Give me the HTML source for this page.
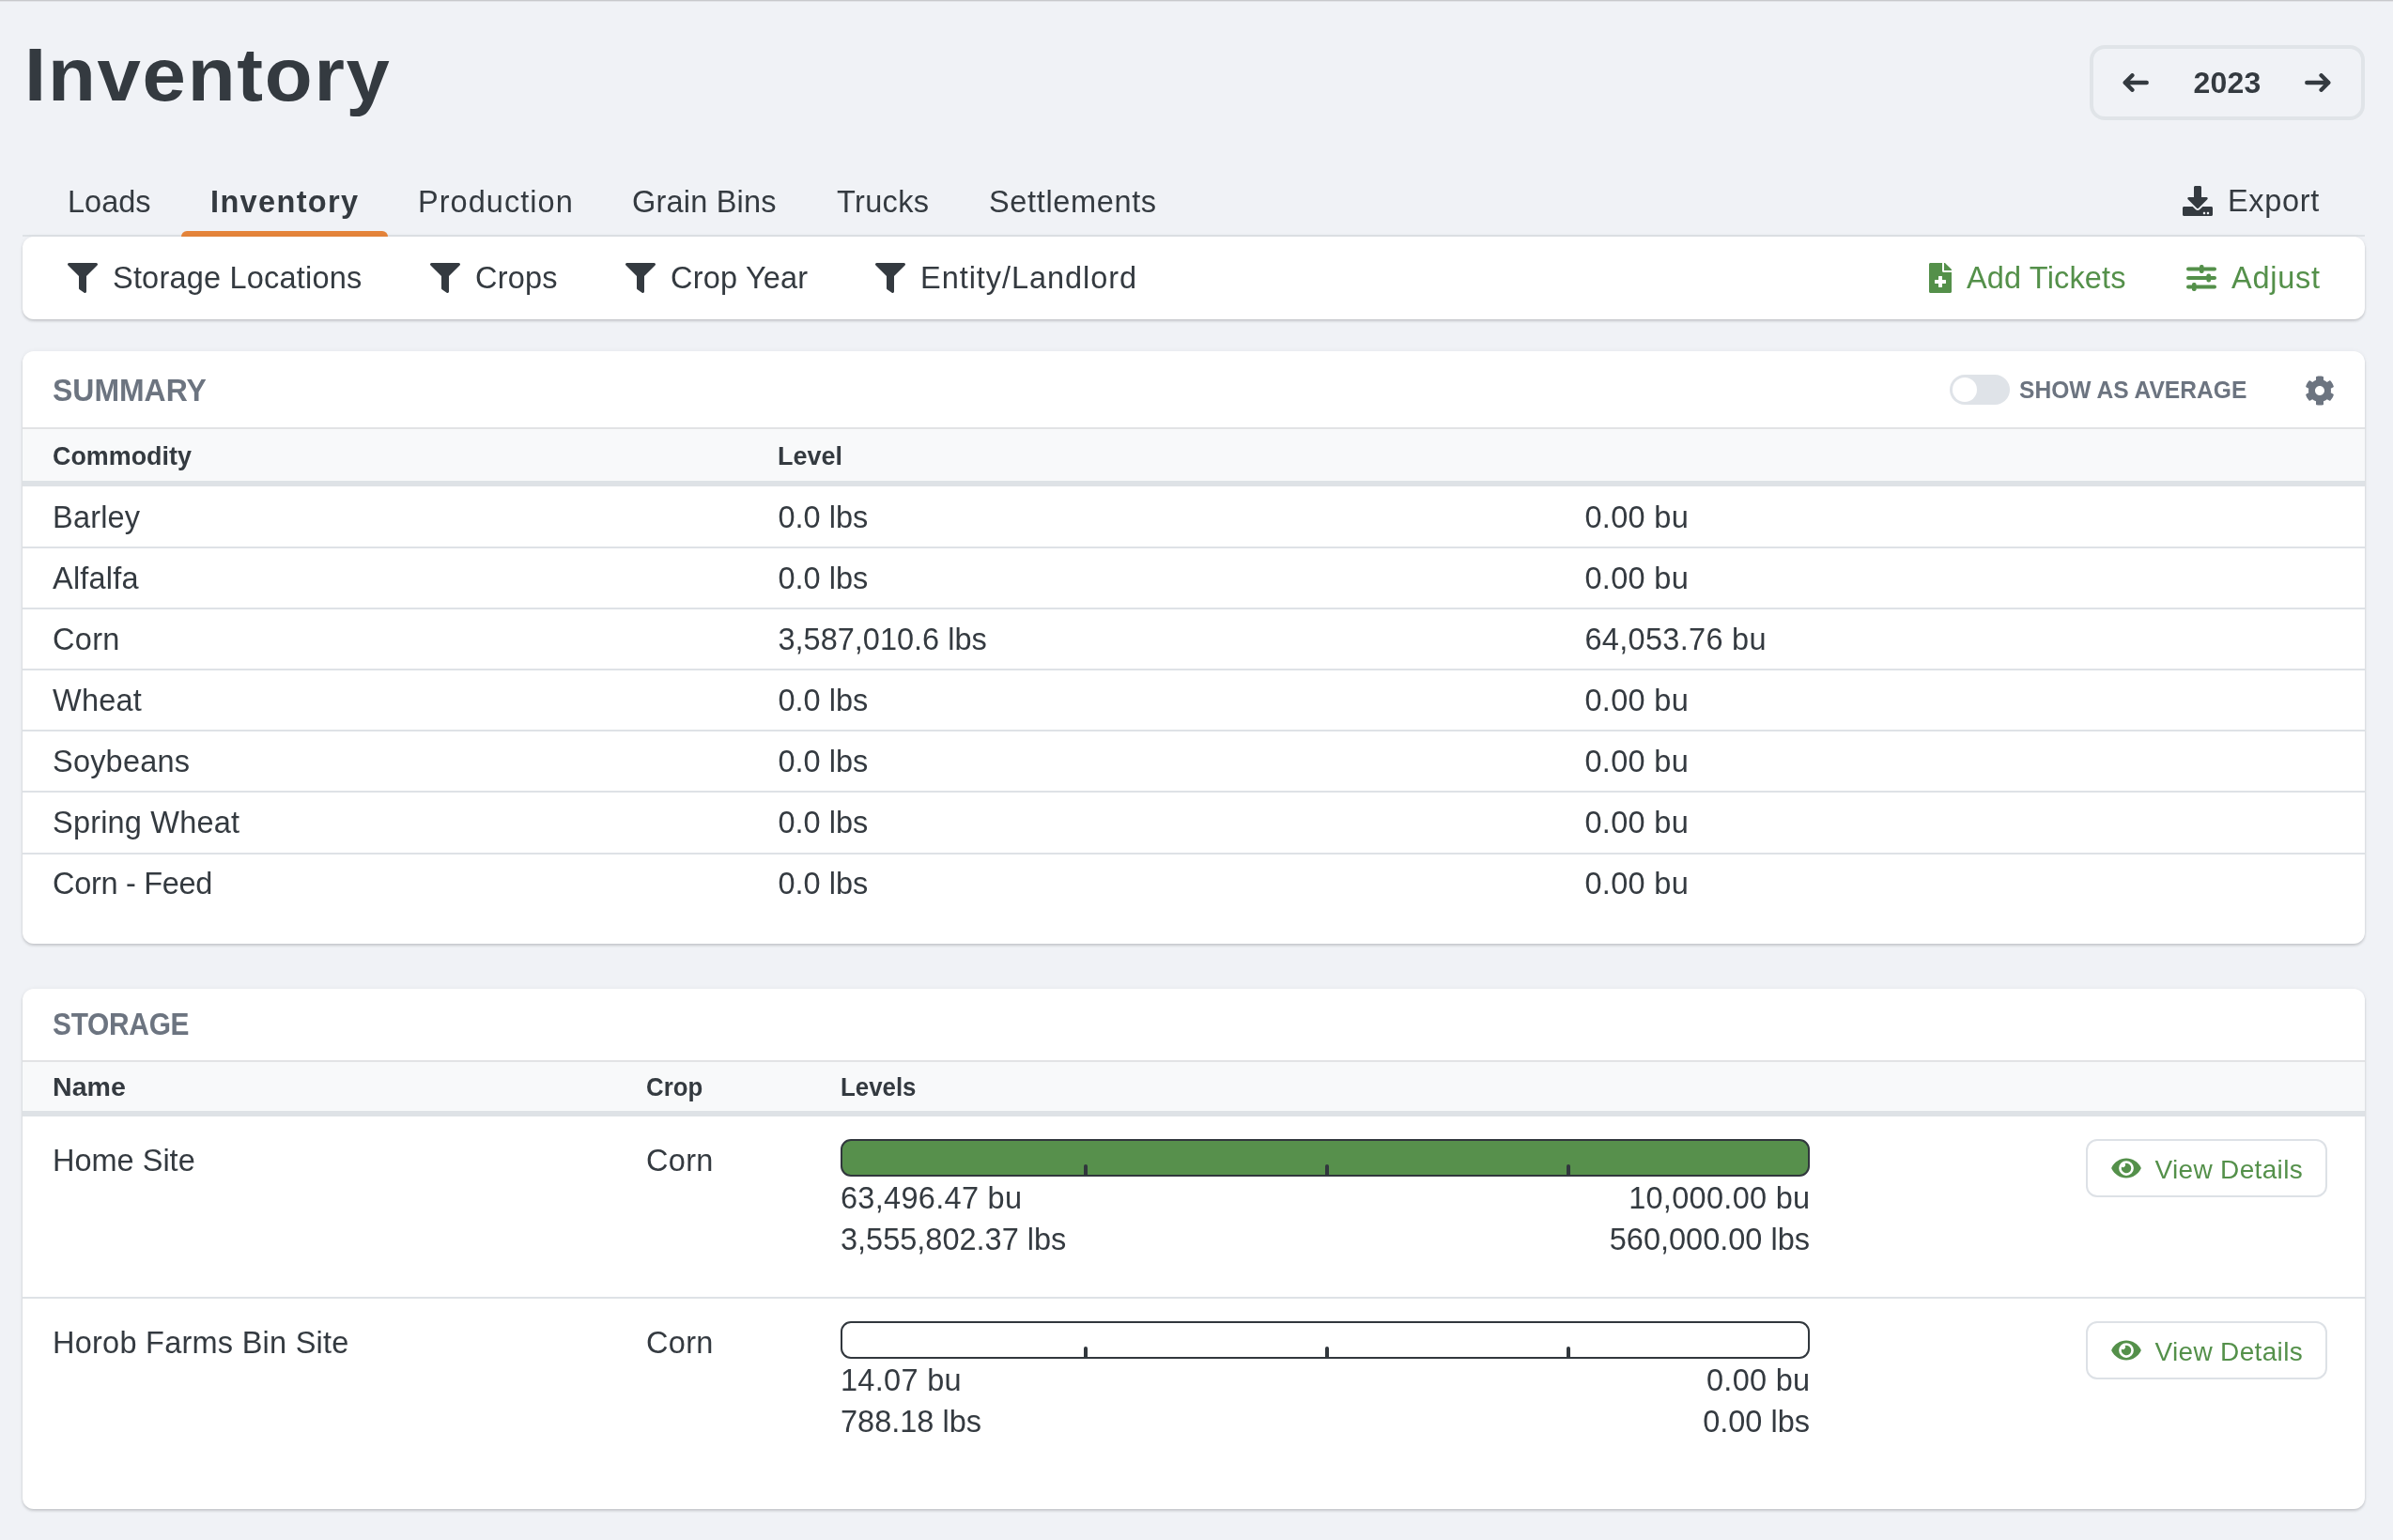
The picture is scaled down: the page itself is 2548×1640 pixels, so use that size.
<!DOCTYPE html>
<html lang="en">
<head>
<meta charset="utf-8">
<title>Inventory</title>
<style>
*{box-sizing:border-box;margin:0;padding:0}
html,body{width:2548px;height:1640px;overflow:hidden}
body{position:relative;background:#f0f2f6;color:#343a40;font-family:"Liberation Sans",sans-serif;font-size:32.5px;line-height:48px;letter-spacing:0}
svg{display:block;fill:currentColor}
.topline{position:absolute;left:0;top:0;width:2548px;height:2px;background:linear-gradient(#c8c9cc 0,#c8c9cc 50%,#e2e3e7 50%,#e2e3e7 100%)}
h1{position:absolute;left:25.800px;top:32px;font-size:80px;line-height:96px;font-weight:700;letter-spacing:1.7px;transform:scaleX(1.0406);transform-origin:0 0;white-space:nowrap}
.year{position:absolute;left:2225px;top:48px;width:293px;height:80px;border:4px solid #e0e4e8;border-radius:16px}
.year svg{position:absolute;top:26px;width:28px;height:20px;fill:none;stroke:currentColor;stroke-width:4.4;stroke-linecap:round;stroke-linejoin:round}
.year .prev{left:31px}
.year .next{left:225px}
.year b{position:absolute;left:0;width:100%;top:12px;text-align:center;font-size:32px;line-height:48px;letter-spacing:.2px}
.tabs{position:absolute;left:24px;top:178px;width:2494px;height:74px;border-bottom:2px solid #dee2e6;list-style:none}
.tabs li{position:absolute;top:0;height:74px;padding:13px 32px 0;white-space:nowrap}
.tabs li.active{font-weight:700;letter-spacing:1.35px;padding-left:31px}
.tabs li.active::after{content:"";position:absolute;left:0;bottom:0;width:100%;height:6px;background:#e5843a;border-radius:6px 6px 0 0}
.tabs li.active span{display:block}
.ico-btn{position:absolute;display:flex;align-items:center;white-space:nowrap;height:48px}
.ico-btn svg{flex:none;margin-right:16px}
.card{position:absolute;left:24px;width:2494px;background:#fff;border-radius:12px;box-shadow:0 2px 3px rgba(40,45,52,.2),0 0 5px rgba(40,45,52,.05)}
.filters{top:252px;height:88px}
.filters .ico-btn{top:20px}
.green{color:#54904a}
.card h2{position:absolute;left:32px;font-size:33px;line-height:48px;font-weight:700;color:#6c7480;white-space:nowrap}
table{position:absolute;left:0;width:2494px;border-collapse:separate;border-spacing:0;table-layout:fixed}
th{font-size:28px;line-height:40px;font-weight:700;letter-spacing:0;text-align:left;padding:0 0 0 32px;background:#f8f9fa;border-top:2px solid #e2e3e5;border-bottom:6px solid #dee2e6;white-space:nowrap}
td{padding:0 0 0 32px;border-bottom:2px solid #dee2e6;white-space:nowrap;vertical-align:top}
tr:last-child td{border-bottom-color:transparent}

.summary{top:374px;height:631px}
.summary h2{top:17.5px;letter-spacing:0;transform:scaleX(.968);transform-origin:0 50%}
.summary table{top:81px}
.summary th{height:63px;padding-top:3px}
.summary td{height:65px;line-height:59px;padding-top:2.5px}
.summary tr:first-child td,.summary tr:nth-child(6) td{height:66px;padding-top:3.5px}
.summary tr:nth-child(6) td{padding-top:3px}
.summary tr:last-child td{padding-top:2px}
.toggle{position:absolute;left:2052px;top:25px;width:64px;height:32px;border-radius:16px;background:#dfe3e8}
.toggle i{position:absolute;left:3px;top:3px;width:26px;height:26px;border-radius:13px;background:#fff}
.avg{position:absolute;left:2126px;top:25px;font-size:26.5px;line-height:32px;font-weight:700;color:#6c7480;letter-spacing:0;transform:scaleX(.928);transform-origin:0 50%;white-space:nowrap}
.gear{position:absolute;left:2430px;top:26px;color:#6c7480}
.storage{top:1053px;height:554px}
.storage h2{top:13.5px;letter-spacing:-.3px;transform:scaleX(.905);transform-origin:0 50%}
.storage table{top:76px}
.storage th{height:60px;padding-top:2px}
.storage td{height:194px;padding-top:23px}
.storage tr:last-child td{height:192px}
.bar{position:relative;width:1032px;height:40px;border:2px solid #31373d;border-radius:11px;background:#fff;overflow:hidden;margin-top:1px}
.bar.full{background:#57904c}
.bar i{position:absolute;bottom:0;width:4px;height:11px;border-radius:2px 2px 0 0;background:#31373d}
.lv{display:flex;justify-content:space-between;width:1032px;line-height:44px;margin-top:.5px}
.lv div:last-child{text-align:right}
.vd{position:absolute;left:2197px;width:257px;height:62px;border:2px solid #dde1e6;border-radius:12px;color:#54904a;font-size:28px;line-height:56px;letter-spacing:.33px;white-space:nowrap}
.vd svg{position:absolute;left:24.5px;top:15px}
.vd span{position:absolute;left:71.5px;top:2.5px}
th span,.sx{display:inline-block;transform-origin:0 50%}
body>*{will-change:transform}
.bu,.summary td:last-child{letter-spacing:.3px}
.summary td:first-child{letter-spacing:.2px}
.lv div:last-child .bu{margin-right:-.5px}
</style>
</head>
<body>
<div class="topline"></div>
<h1>Inventory</h1>

<div class="year">
  <svg class="prev" viewBox="0 0 28 20"><path d="M25.700 10H2.700M10.400 2.300L2.700 10l7.700 7.700"/></svg>
  <b>2023</b>
  <svg class="next" viewBox="0 0 28 20"><path d="M2.300 10h23M17.600 2.300l7.700 7.700-7.700 7.700"/></svg>
</div>
<ul class="tabs">
  <li style="left:16px">Loads</li>
  <li class="active" style="left:169px;width:220px">Inventory</li>
  <li style="left:389px;letter-spacing:1.05px">Production</li>
  <li style="left:617px;letter-spacing:.2px">Grain Bins</li>
  <li style="left:835px;letter-spacing:.35px">Trucks</li>
  <li style="left:997px;letter-spacing:.65px">Settlements</li>
</ul>
<div class="ico-btn" style="left:2324px;top:190px">
  <svg width="32" height="32" viewBox="0 0 512 512"><path d="M216 0h80c13.300 0 24 10.700 24 24v168h87.700c17.800 0 26.700 21.500 14.100 34.100L269.700 378.300c-7.500 7.500-19.800 7.500-27.300 0L90.100 226.100c-12.600-12.600-3.700-34.100 14.100-34.100H192V24c0-13.300 10.700-24 24-24zm296 376v112c0 13.300-10.700 24-24 24H24c-13.300 0-24-10.700-24-24V376c0-13.300 10.700-24 24-24h146.700l49 49c20.100 20.100 52.500 20.100 72.600 0l49-49H488c13.300 0 24 10.700 24 24zm-124 88c0-11-9-20-20-20s-20 9-20 20 9 20 20 20 20-9 20-20zm64 0c0-11-9-20-20-20s-20 9-20 20 9 20 20 20 20-9 20-20z"/></svg>
  <span style="letter-spacing:.65px">Export</span>
</div>
<div class="card filters">
  <div class="ico-btn" style="left:48px"><svg width="32" height="32" viewBox="0 0 512 512"><path d="M487.976 0H24.028C2.71 0-8.047 25.866 7.058 40.971L192 225.941V432c0 7.831 3.821 15.17 10.237 19.662l80 55.98C298.02 518.69 320 507.493 320 487.98V225.941l184.947-184.97C520.021 25.896 509.338 0 487.976 0z"/></svg><span style="letter-spacing:.2px">Storage Locations</span></div>
  <div class="ico-btn" style="left:434px"><svg width="32" height="32" viewBox="0 0 512 512"><path d="M487.976 0H24.028C2.71 0-8.047 25.866 7.058 40.971L192 225.941V432c0 7.831 3.821 15.17 10.237 19.662l80 55.98C298.02 518.69 320 507.493 320 487.98V225.941l184.947-184.97C520.021 25.896 509.338 0 487.976 0z"/></svg><span style="letter-spacing:.2px">Crops</span></div>
  <div class="ico-btn" style="left:642px"><svg width="32" height="32" viewBox="0 0 512 512"><path d="M487.976 0H24.028C2.71 0-8.047 25.866 7.058 40.971L192 225.941V432c0 7.831 3.821 15.17 10.237 19.662l80 55.98C298.02 518.69 320 507.493 320 487.98V225.941l184.947-184.97C520.021 25.896 509.338 0 487.976 0z"/></svg><span style="letter-spacing:.2px">Crop Year</span></div>
  <div class="ico-btn" style="left:908px"><svg width="32" height="32" viewBox="0 0 512 512"><path d="M487.976 0H24.028C2.71 0-8.047 25.866 7.058 40.971L192 225.941V432c0 7.831 3.821 15.17 10.237 19.662l80 55.98C298.02 518.69 320 507.493 320 487.98V225.941l184.947-184.97C520.021 25.896 509.338 0 487.976 0z"/></svg><span style="letter-spacing:.95px">Entity/Landlord</span></div>
  <div class="ico-btn green" style="left:2030px">
    <svg width="24" height="32" viewBox="0 0 384 512"><path d="M377 105L279.100 7c-4.500-4.500-10.600-7-17-7H256v128h128v-6.100c0-6.300-2.500-12.400-7-16.900zm-153 31V0H24C10.700 0 0 10.700 0 24v464c0 13.300 10.700 24 24 24h336c13.300 0 24-10.700 24-24V160H248c-13.200 0-24-10.800-24-24zm64 160v48c0 4.400-3.600 8-8 8h-56v56c0 4.400-3.600 8-8 8h-48c-4.400 0-8-3.600-8-8v-56h-56c-4.400 0-8-3.600-8-8v-48c0-4.400 3.600-8 8-8h56v-56c0-4.400 3.600-8 8-8h48c4.400 0 8 3.600 8 8v56h56c4.400 0 8 3.600 8 8z"/></svg>
    <span style="letter-spacing:.15px">Add Tickets</span>
  </div>
  <div class="ico-btn green" style="left:2304px">
    <svg width="32" height="32" viewBox="0 0 32 32"><rect x="0" y="4.500" width="32" height="4" rx="2"/><rect x="0" y="14" width="32" height="4" rx="2"/><rect x="0" y="23.500" width="32" height="4" rx="2"/><rect x="14" y="2" width="4.500" height="9" rx="1.800"/><rect x="21.500" y="11.500" width="4.500" height="9" rx="1.800"/><rect x="6" y="21" width="4.500" height="9" rx="1.800"/></svg>
    <span style="letter-spacing:.75px">Adjust</span>
  </div>
</div>

<section class="card summary">
  <h2>SUMMARY</h2>
  <div class="toggle"><i></i></div>
  <div class="avg">SHOW AS AVERAGE</div>
  <div class="gear"><svg width="32" height="32" viewBox="0 0 512 512"><path d="M487.4 315.7l-42.600-24.600c4.300-23.200 4.300-47 0-70.200l42.600-24.600c4.900-2.800 7.100-8.600 5.500-14-11.100-35.600-30-67.800-54.700-94.600-3.800-4.100-10-5.100-14.800-2.300L380.800 110c-17.900-15.400-38.500-27.300-60.800-35.100V25.800c0-5.600-3.900-10.500-9.400-11.700-36.700-8.200-74.300-7.800-109.200 0-5.500 1.200-9.400 6.100-9.400 11.700V75c-22.200 7.900-42.800 19.800-60.800 35.100L88.700 85.500c-4.900-2.800-11-1.900-14.800 2.300-24.700 26.700-43.600 58.900-54.700 94.600-1.700 5.400.6 11.200 5.500 14L67.300 221c-4.300 23.200-4.300 47 0 70.200l-42.600 24.600c-4.900 2.800-7.100 8.600-5.500 14 11.100 35.600 30 67.800 54.700 94.600 3.800 4.100 10 5.100 14.800 2.300l42.600-24.600c17.900 15.400 38.500 27.300 60.800 35.100v49.200c0 5.600 3.900 10.500 9.400 11.700 36.700 8.200 74.300 7.800 109.200 0 5.500-1.200 9.400-6.100 9.400-11.700v-49.200c22.200-7.900 42.800-19.800 60.800-35.100l42.600 24.600c4.900 2.800 11 1.900 14.800-2.300 24.700-26.700 43.600-58.900 54.700-94.600 1.500-5.500-.7-11.300-5.600-14.100zM256 336c-44.100 0-80-35.900-80-80s35.900-80 80-80 80 35.900 80 80-35.900 80-80 80z"/></svg></div>
  <table>
    <colgroup><col style="width:772.5px"><col style="width:859px"><col></colgroup>
    <thead><tr><th><span style="transform:scaleX(.96)">Commodity</span></th><th><span style="transform:scaleX(.962);margin-left:-1px">Level</span></th><th></th></tr></thead>
    <tbody>
<tr><td>Barley</td><td>0.0 lbs</td><td>0.00 bu</td></tr>
<tr><td>Alfalfa</td><td>0.0 lbs</td><td>0.00 bu</td></tr>
<tr><td style="letter-spacing:.3px">Corn</td><td>3,587,010.6 lbs</td><td>64,053.76 bu</td></tr>
<tr><td>Wheat</td><td>0.0 lbs</td><td>0.00 bu</td></tr>
<tr><td>Soybeans</td><td>0.0 lbs</td><td>0.00 bu</td></tr>
<tr><td>Spring Wheat</td><td>0.0 lbs</td><td>0.00 bu</td></tr>
<tr><td style="letter-spacing:-.3px">Corn - Feed</td><td>0.0 lbs</td><td>0.00 bu</td></tr>
    </tbody>
  </table>
</section>
<section class="card storage">
  <h2>STORAGE</h2>
  <table>
    <colgroup><col style="width:632px"><col style="width:207px"><col style="width:1096px"><col></colgroup>
    <thead><tr><th><span style="transform:scaleX(1.02)">Name</span></th><th><span style="transform:scaleX(.922)">Crop</span></th><th><span style="transform:scaleX(.923)">Levels</span></th><th></th></tr></thead>
    <tbody>
      <tr><td>Home Site</td><td style="letter-spacing:.3px">Corn</td>
        <td><div class="bar full"><i style="left:257px"></i><i style="left:514px"></i><i style="left:771px"></i></div>
          <div class="lv"><div><span class="bu">63,496.47 bu</span><br>3,555,802.37 lbs</div><div><span class="bu">10,000.00 bu</span><br>560,000.00 lbs</div></div></td>
        <td></td></tr>
      <tr><td style="letter-spacing:.25px">Horob Farms Bin Site</td><td style="letter-spacing:.3px">Corn</td>
        <td><div class="bar"><i style="left:257px"></i><i style="left:514px"></i><i style="left:771px"></i></div>
          <div class="lv"><div><span class="bu">14.07 bu</span><br>788.18 lbs</div><div><span class="bu">0.00 bu</span><br>0.00 lbs</div></div></td>
        <td></td></tr>
    </tbody>
  </table>
  <div class="vd" style="top:160px"><svg width="32" height="28" viewBox="0 0 576 512"><path d="M572.52 241.4C518.29 135.59 410.93 64 288 64S57.68 135.64 3.48 241.410a32.350 32.350 0 0 0 0 29.190C57.71 376.410 165.070 448 288 448s230.320-71.640 284.520-177.410a32.350 32.350 0 0 0 0-29.190zM288 400a144 144 0 1 1 144-144 143.930 143.930 0 0 1-144 144zm0-240a95.310 95.310 0 0 0-25.310 3.790 47.850 47.850 0 0 1-66.900 66.900A95.780 95.780 0 1 0 288 160z"/></svg><span>View Details</span></div>
  <div class="vd" style="top:354px"><svg width="32" height="28" viewBox="0 0 576 512"><path d="M572.52 241.4C518.29 135.59 410.93 64 288 64S57.68 135.64 3.48 241.410a32.350 32.350 0 0 0 0 29.190C57.71 376.410 165.070 448 288 448s230.320-71.640 284.520-177.410a32.350 32.350 0 0 0 0-29.190zM288 400a144 144 0 1 1 144-144 143.930 143.930 0 0 1-144 144zm0-240a95.310 95.310 0 0 0-25.310 3.790 47.850 47.850 0 0 1-66.900 66.900A95.780 95.780 0 1 0 288 160z"/></svg><span>View Details</span></div>
</section>
</body>
</html>
